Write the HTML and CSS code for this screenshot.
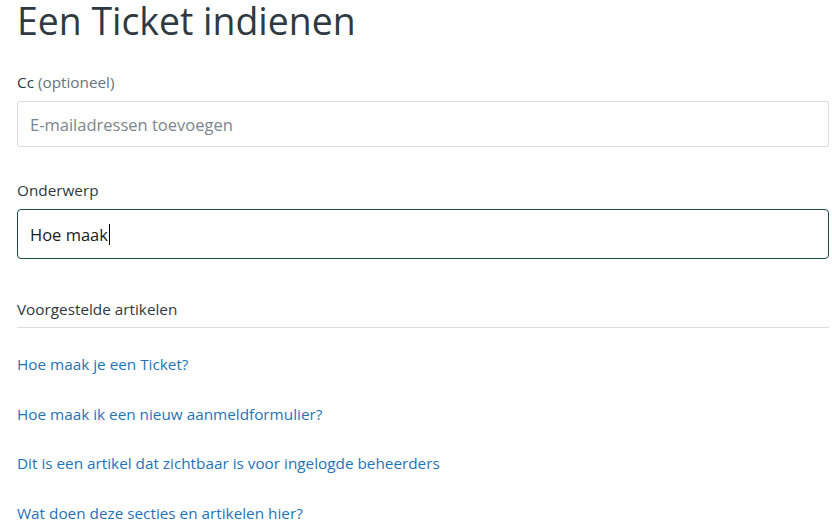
FILE: index.html
```html
<!DOCTYPE html>
<html lang="nl">
<head>
<meta charset="utf-8">
<link rel="stylesheet" href="styles.css">
</head>
<body>
<main class="page">
  <h1 class="title">Een Ticket indienen</h1>
  <form class="form">
    <div class="field field-cc">
      <label class="label">Cc <span class="optional">(optioneel)</span></label>
      <div class="input input-plain"><span class="placeholder">E-mailadressen toevoegen</span></div>
    </div>
    <div class="field field-subject">
      <label class="label">Onderwerp</label>
      <div class="input input-focus"><span class="value">Hoe maak</span><span class="caret"></span></div>
    </div>
    <section class="suggest">
      <h2 class="suggest-title">Voorgestelde artikelen</h2>
      <ul class="suggest-list">
        <li><a href="#">Hoe maak je een Ticket?</a></li>
        <li><a href="#">Hoe maak ik een nieuw aanmeldformulier?</a></li>
        <li><a href="#">Dit is een artikel dat zichtbaar is voor ingelogde beheerders</a></li>
        <li><a href="#">Wat doen deze secties en artikelen hier?</a></li>
      </ul>
    </section>
  </form>
</main>
</body>
</html>
```
FILE: styles.css
```css
html, body {
  margin: 0;
  padding: 0;
  background: #fff;
}
body {
  font-family: "Open Sans", "Noto Sans", "Liberation Sans", sans-serif;
  color: #2f3941;
  font-size: 15.3px;
}
.page {
  padding: 0 3px 0 17px;
}
.title {
  margin: 0;
  font-weight: 400;
  font-size: 37.4px;
  line-height: 42px;
  color: #2f3941;
}
.form {
  margin-top: 30px;
}
.field {
  display: flex;
  flex-direction: column;
}
.label {
  font-size: 15.3px;
  line-height: 20px;
  margin-bottom: 9px;
  color: #2f3941;
}
.optional {
  color: #68737d;
}
.input {
  box-sizing: border-box;
  display: flex;
  align-items: center;
  padding: 0 12px;
  font-size: 16.5px;
  background: #fff;
}
.input-plain {
  height: 46px;
  border: 1px solid #dcdcdc;
  border-radius: 2px;
}
.placeholder {
  color: #7b858e;
}
.field-subject {
  margin-top: 33px;
}
.input-focus {
  height: 50px;
  border: 1px solid #1c4a45;
  border-radius: 4px;
  color: #1a1a1a;
}
.caret {
  display: inline-block;
  width: 1px;
  height: 21px;
  background: #000;
  margin-left: 1px;
}
.suggest {
  margin-top: 40px;
}
.suggest-title {
  margin: 0;
  font-size: 15.3px;
  font-weight: 400;
  line-height: 20px;
  padding-bottom: 8px;
  border-bottom: 1px solid #dcdcdc;
  color: #2f3941;
}
.suggest-list {
  list-style: none;
  margin: 0;
  padding: 0;
  padding-top: 26px;
}
.suggest-list li {
  line-height: 20px;
  margin-bottom: 29.5px;
}
.suggest-list a {
  color: #1f73b7;
  text-decoration: none;
  font-size: 15.3px;
}
```
